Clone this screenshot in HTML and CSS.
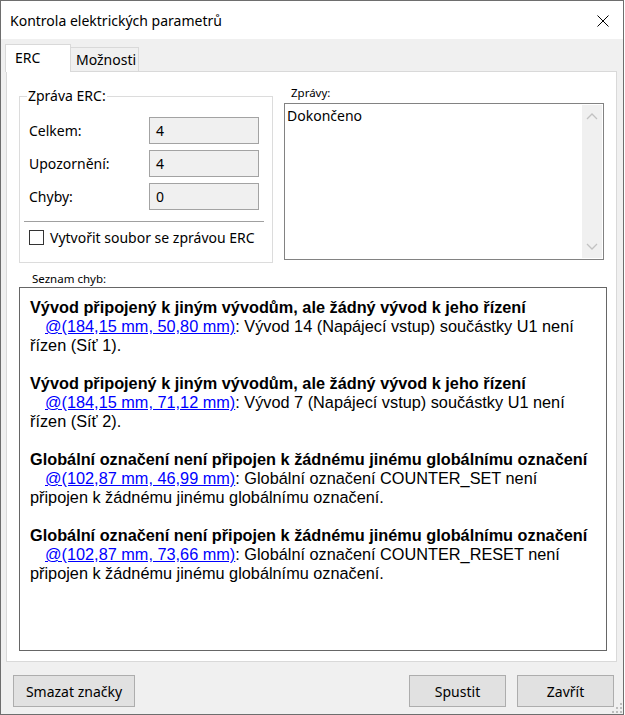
FILE: index.html
```html
<!DOCTYPE html>
<html lang="cs">
<head>
<meta charset="utf-8">
<title>Kontrola elektrických parametrů</title>
<link rel="stylesheet" href="styles.css">
</head>
<body>
<div class="window">
  <div class="titlebar">
    <span class="title">Kontrola elektrických parametrů</span>
    <span class="close">
      <svg width="12" height="12" viewBox="0 0 12 12"><path d="M0.5 0.5 L11.5 11.5 M11.5 0.5 L0.5 11.5" stroke="#000" stroke-width="1" fill="none"/></svg>
    </span>
  </div>
  <div class="client">
    <div class="tabs">
      <div class="tab active">ERC</div>
      <div class="tab">Možnosti</div>
    </div>
    <div class="panel">
      <div class="top-row">
        <fieldset class="group">
          <legend>Zpráva ERC:</legend>
          <div class="field first"><span class="field-label">Celkem:</span><div class="value">4</div></div>
          <div class="field"><span class="field-label">Upozornění:</span><div class="value">4</div></div>
          <div class="field"><span class="field-label">Chyby:</span><div class="value">0</div></div>
          <div class="sep"></div>
          <div class="check"><span class="box"></span><span>Vytvořit soubor se zprávou ERC</span></div>
        </fieldset>
        <div class="messages">
          <div class="small-label msg-label">Zprávy:</div>
          <div class="textbox">
            <div class="tb-text">Dokončeno</div>
            <div class="scrollbar">
              <svg width="20" height="14" viewBox="0 0 20 14"><path d="M5 9 L10 4 L15 9" stroke="#c2c2c2" stroke-width="1.3" fill="none"/></svg>
              <svg width="20" height="14" viewBox="0 0 20 14"><path d="M5 5 L10 10 L15 5" stroke="#c2c2c2" stroke-width="1.3" fill="none"/></svg>
            </div>
          </div>
        </div>
      </div>
      <div class="small-label list-label">Seznam chyb:</div>
      <div class="listbox">
        <div class="item">
          <div class="item-title">Vývod připojený k jiným vývodům, ale žádný vývod k jeho řízení</div>
          <div class="item-desc"><a class="loc">@(184,15 mm, 50,80 mm)</a>: Vývod 14 (Napájecí vstup) součástky U1 není řízen (Síť 1).</div>
        </div>
        <div class="item">
          <div class="item-title">Vývod připojený k jiným vývodům, ale žádný vývod k jeho řízení</div>
          <div class="item-desc"><a class="loc">@(184,15 mm, 71,12 mm)</a>: Vývod 7 (Napájecí vstup) součástky U1 není řízen (Síť 2).</div>
        </div>
        <div class="item">
          <div class="item-title">Globální označení není připojen k žádnému jinému globálnímu označení</div>
          <div class="item-desc"><a class="loc">@(102,87 mm, 46,99 mm)</a>: Globální označení COUNTER_SET není připojen k žádnému jinému globálnímu označení.</div>
        </div>
        <div class="item">
          <div class="item-title">Globální označení není připojen k žádnému jinému globálnímu označení</div>
          <div class="item-desc"><a class="loc">@(102,87 mm, 73,66 mm)</a>: Globální označení COUNTER_RESET není připojen k žádnému jinému globálnímu označení.</div>
        </div>
      </div>
    </div>
    <div class="footer">
      <button class="btn btn-wide">Smazat značky</button>
      <div class="spacer"></div>
      <button class="btn">Spustit</button>
      <button class="btn">Zavřít</button>
      <span class="grip">
        <svg width="10" height="10" viewBox="0 0 10 10" fill="#bdbdbd">
          <rect x="8" y="0" width="2" height="2"/>
          <rect x="4" y="4" width="2" height="2"/><rect x="8" y="4" width="2" height="2"/>
          <rect x="0" y="8" width="2" height="2"/><rect x="4" y="8" width="2" height="2"/><rect x="8" y="8" width="2" height="2"/>
        </svg>
      </span>
    </div>
  </div>
</div>
</body>
</html>
```
FILE: styles.css
```css
* { box-sizing: border-box; }
html, body { margin: 0; padding: 0; background: #ffffff; }
body {
  font-family: "Noto Sans", "Open Sans", sans-serif;
  font-size: 14px;
  color: #000;
}
.window {
  width: 624px;
  height: 715px;
  border: 1px solid #6e6e6e;
  background: #f0f0f0;
  display: flex;
  flex-direction: column;
}
.titlebar {
  height: 38px;
  background: #ffffff;
  display: flex;
  align-items: center;
  padding-left: 9px;
  padding-right: 14px;
}
.title { flex: 1; font-size: 14px; }
.close { display: flex; width: 12px; height: 12px; margin-top: 2px; }
.client {
  flex: 1;
  display: flex;
  flex-direction: column;
  padding: 5px 6px 7px 5px;
}
.tabs {
  display: flex;
  align-items: flex-end;
  height: 27px;
}
.tab {
  height: 24px;
  width: 69px;
  padding: 0 0 0 5px;
  border: 1px solid #d9d9d9;
  border-bottom: none;
  background: #f0f0f0;
  font-size: 14px;
  line-height: 23px;
}
.tab.active {
  position: relative;
  z-index: 1;
  height: 28px;
  width: 66px;
  margin-left: -1px;
  margin-bottom: -1px;
  margin-right: -1px;
  background: #ffffff;
  padding-left: 9px;
  line-height: 25px;
}
.panel {
  height: 591px;
  width: 611px;
  border: 1px solid #d9d9d9;
  background: #ffffff;
  padding: 14px 0 10px 12px;
  display: flex;
  flex-direction: column;
}
.top-row { display: flex; }
.group {
  margin: 0;
  width: 254px;
  padding: 0 13px 15px 9px;
  border: 1px solid #dcdcdc;
  min-width: 0;
}
.group legend {
  padding: 0 1px;
  margin-left: -2px;
  font-size: 14px;
  line-height: 20px;
}
.field {
  display: flex;
  align-items: center;
  height: 27px;
  margin-top: 6px;
}
.field.first { margin-top: 11px; }
.field-label { flex: 1; font-size: 14px; }
.value {
  width: 110px;
  height: 27px;
  border: 1px solid #a3a3a3;
  background: #f0f0f0;
  padding-left: 6px;
  font-size: 14px;
  line-height: 25px;
}
.sep {
  height: 1px;
  background: #a0a0a0;
  margin: 11px -5px 0 -5px;
}
.check {
  display: flex;
  align-items: center;
  height: 20px;
  margin-top: 5px;
  font-size: 14px;
  white-space: nowrap;
}
.check .box {
  width: 15px;
  height: 15px;
  border: 1px solid #333333;
  background: #fff;
  margin-right: 6px;
}
.messages {
  margin-left: 11px;
  width: 320px;
}
.small-label { font-size: 11.5px; line-height: 16px; }
.msg-label { margin-top: -1px; padding-left: 7px; }
.textbox {
  margin-top: 2px;
  height: 157px;
  border: 1px solid #828282;
  display: flex;
  background: #fff;
}
.tb-text {
  flex: 1;
  font-size: 14px;
  padding: 2px 0 0 2px;
  line-height: 20px;
}
.scrollbar {
  width: 20px;
  margin: 1px;
  background: #f0f0f0;
  display: flex;
  flex-direction: column;
  justify-content: space-between;
  padding: 5px 0;
}
.list-label { margin-top: 8px; padding-left: 13px; }
.listbox {
  flex: 1;
  width: 588px;
  border: 1px solid #666666;
  background: #fff;
  padding: 10px 8px 0 10px;
  font-family: "Liberation Sans", Arial, sans-serif;
  font-size: 16.3px;
  line-height: 19px;
}
.item { margin-bottom: 19px; }
.item-title { font-weight: bold; }
.item-desc { text-indent: 15px; }
.loc { color: #0000ff; text-decoration: underline; }
.footer {
  display: flex;
  align-items: flex-end;
  margin-top: 13px;
  height: 32px;
  padding-left: 7px;
  padding-right: 3px;
  position: relative;
}
.spacer { flex: 1; }
.btn {
  height: 32px;
  width: 97px;
  background: #e1e1e1;
  border: 1px solid #adadad;
  font-family: "Noto Sans", "Open Sans", sans-serif;
  font-size: 14px;
  color: #000;
  padding: 0;
  margin: 0 0 0 11px;
}
.btn-wide { width: 122px; margin-left: 0; }
.grip { position: absolute; right: -5px; bottom: -6px; display: flex; }
```
